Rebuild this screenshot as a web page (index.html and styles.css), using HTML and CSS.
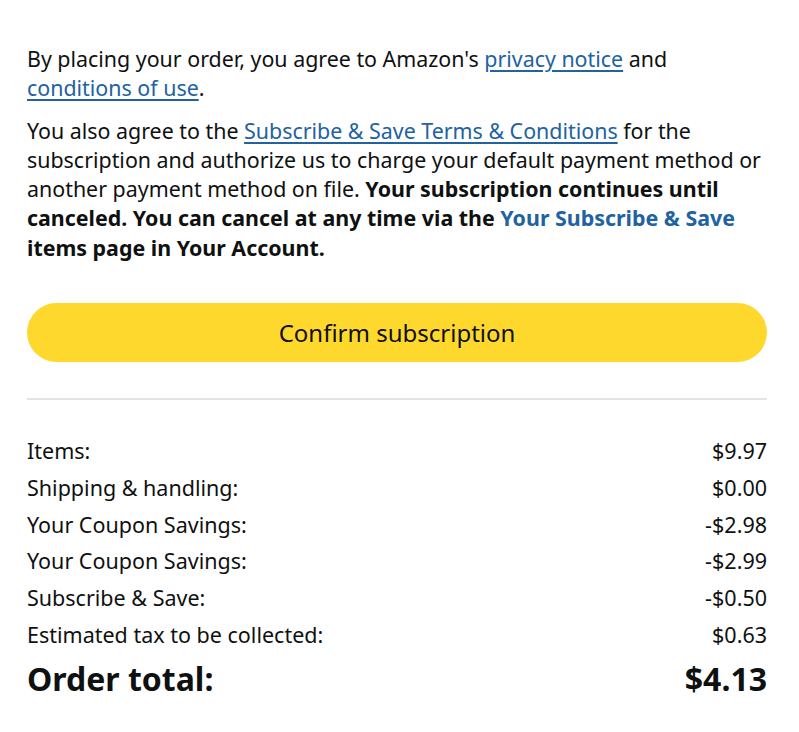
FILE: index.html
```html
<!DOCTYPE html>
<html>
<head>
<meta charset="utf-8">
<link rel="stylesheet" href="styles.css">
</head>
<body>
<div class="page">
  <p class="para">By placing your order, you agree to Amazon's <a class="link" href="#">privacy notice</a> and <a class="link" href="#">conditions of use</a>.</p>
  <p class="para">You also agree to the <a class="link" href="#">Subscribe &amp; Save Terms &amp; Conditions</a> for the subscription and authorize us to charge your default payment method or another payment method on file. <b class="strong">Your subscription continues until canceled. You can cancel at any time via the <span class="blue">Your Subscribe &amp; Save</span> items page in Your Account.</b></p>
  <button class="confirm">Confirm subscription</button>
  <hr class="divider">
  <div class="summary">
    <div class="row"><span>Items:</span><span>$9.97</span></div>
    <div class="row"><span>Shipping &amp; handling:</span><span>$0.00</span></div>
    <div class="row"><span>Your Coupon Savings:</span><span>-$2.98</span></div>
    <div class="row"><span>Your Coupon Savings:</span><span>-$2.99</span></div>
    <div class="row"><span>Subscribe &amp; Save:</span><span>-$0.50</span></div>
    <div class="row"><span>Estimated tax to be collected:</span><span>$0.63</span></div>
    <div class="row total"><span>Order total:</span><span>$4.13</span></div>
  </div>
</div>
</body>
</html>
```
FILE: styles.css
```css
* { box-sizing: border-box; }
body {
  margin: 0;
  background: #fff;
  font-family: "Noto Sans", "Open Sans", sans-serif;
  color: #0f1111;
}
.page {
  padding: 44px 32px 0 27px;
}
.para {
  margin: 0 0 13px 0;
  font-size: 21.4px;
  line-height: 29.3px;
}
.link {
  color: #2162a1;
  text-decoration: underline;
  text-underline-offset: 3px;
}
.strong { font-weight: 700; }
.blue { color: #2162a1; }
.confirm {
  display: block;
  width: 740px;
  height: 59px;
  margin-top: 41px;
  border: none;
  border-radius: 30px;
  background: #ffd82e;
  font-family: inherit;
  font-size: 24px;
  color: #0f1111;
}
.divider {
  width: 740px;
  margin: 36px 0 0 0;
  border: none;
  border-top: 2px solid #e3e3e3;
}
.summary {
  width: 740px;
  margin-top: 33px;
}
.row {
  display: flex;
  justify-content: space-between;
  font-size: 21.5px;
  line-height: 36.8px;
}
.total {
  font-size: 32px;
  font-weight: 700;
  line-height: 50px;
}
```
